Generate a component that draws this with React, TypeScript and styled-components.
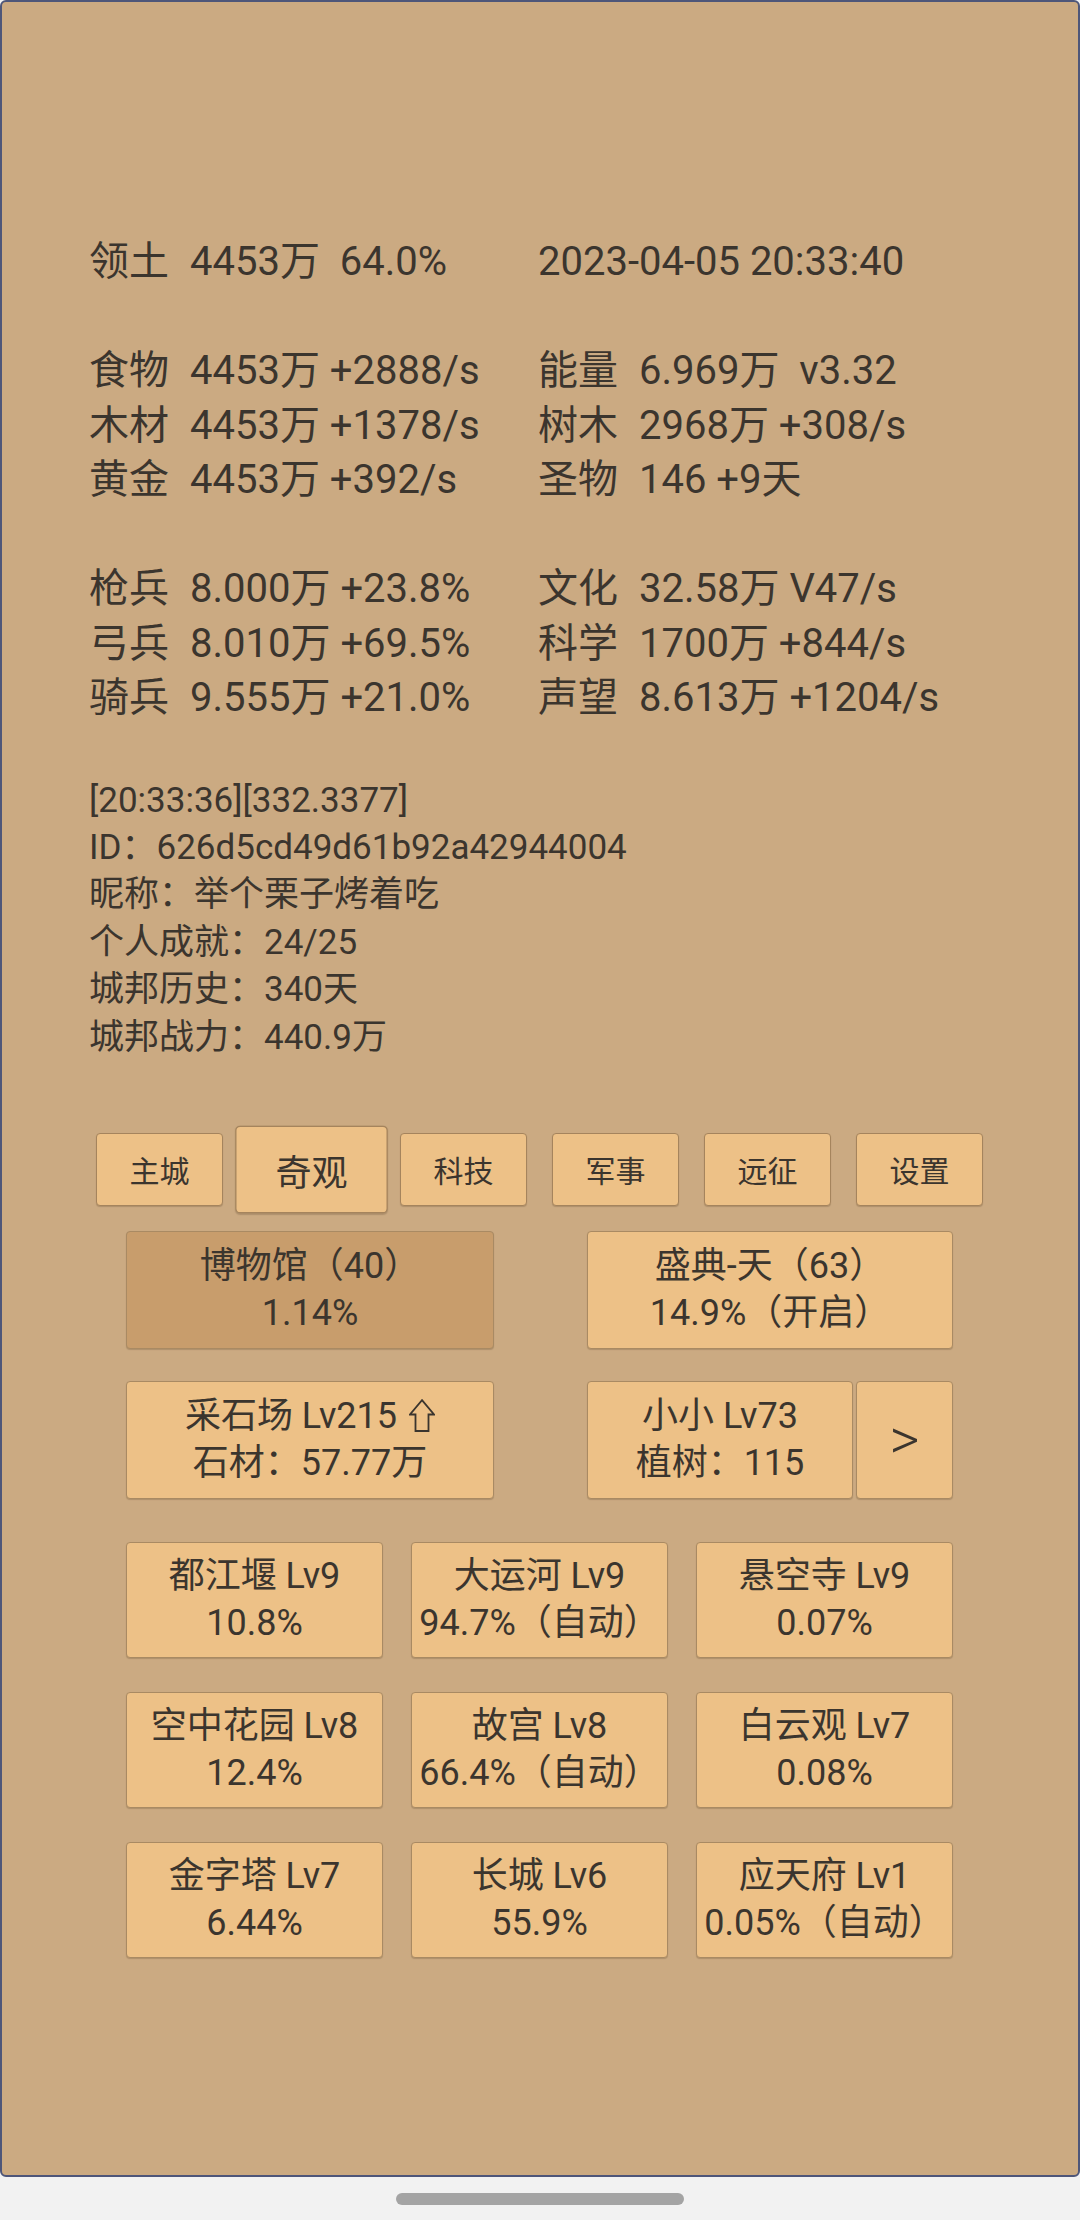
import React from "react";
import styled, { createGlobalStyle } from "styled-components";

const ink = "#3b352e";

const GlobalStyle = createGlobalStyle`
  html, body {
    margin: 0;
    padding: 0;
    background: #f2f2f2;
  }
  body {
    font-family: Roboto, "Noto Sans CJK SC", sans-serif;
    color: ${ink};
  }
`;

const Screen = styled.div`
  width: 1080px;
  height: 2220px;
  display: flex;
  flex-direction: column;
`;

const Panel = styled.div`
  box-sizing: border-box;
  height: 2177px;
  background: #cbaa82;
  border: 2px solid #4e5679;
  border-radius: 6px;
  padding-top: 233px;
  display: flex;
  flex-direction: column;
`;

const HomeArea = styled.div`
  flex: 1;
  display: flex;
  justify-content: center;
  align-items: center;
`;

const HomeBar = styled.div`
  width: 288px;
  height: 12px;
  border-radius: 6px;
  background: #a4a4a4;
`;

const Stats = styled.div`
  padding-left: 87px;
  font-size: 40px;
  white-space: pre;
`;

const StatGroup = styled.div<{ $gap?: boolean }>`
  margin-top: ${(p) => (p.$gap ? "54.5px" : "0")};
`;

const StatRow = styled.div`
  display: grid;
  grid-template-columns: 449px 1fr;
  height: 54.5px;
  line-height: 54.5px;
`;

const StatCell = styled.div`
  display: flex;
`;

const StatLabel = styled.span`
  width: 101px;
  flex: none;
`;

const Info = styled.div`
  margin-top: 51px;
  padding-left: 87px;
  font-size: 35px;
  line-height: 47.4px;
`;

const Tabs = styled.div`
  margin-top: 72px;
  padding-left: 94px;
  display: flex;
  gap: 25px;
`;

const Tab = styled.div<{ $active?: boolean }>`
  box-sizing: border-box;
  width: 127px;
  height: 73px;
  display: flex;
  align-items: center;
  justify-content: center;
  font-size: 30px;
  background: #edc187;
  border: 1px solid #a5845d;
  border-radius: 4px;
  box-shadow: 0 1px 1px rgba(60, 40, 20, 0.2);
  transform: ${(p) => (p.$active ? "scale(1.2)" : "none")};
`;

const Cards = styled.div`
  margin-top: 25px;
  padding-left: 124px;
  width: 827px;
  display: flex;
  flex-direction: column;
`;

const PairRow = styled.div<{ $mt: number }>`
  margin-top: ${(p) => p.$mt}px;
  display: grid;
  grid-template-columns: 368px 366px;
  column-gap: 93px;
  height: 118px;
`;

const TripleRow = styled.div<{ $mt: number }>`
  margin-top: ${(p) => p.$mt}px;
  display: grid;
  grid-template-columns: repeat(3, 257px);
  column-gap: 28px;
  height: 116px;
`;

const Split = styled.div`
  display: grid;
  grid-template-columns: 266px 97px;
  column-gap: 3px;
`;

const Card = styled.div<{ $pressed?: boolean }>`
  box-sizing: border-box;
  display: flex;
  flex-direction: column;
  align-items: center;
  justify-content: center;
  font-size: 36px;
  line-height: 47px;
  white-space: nowrap;
  background: ${(p) => (p.$pressed ? "#c89d6c" : "#edc187")};
  border: 1px solid #a98a63;
  border-radius: 4px;
  box-shadow: 0 1px 1px rgba(60, 40, 20, 0.2);
`;

const NextCard = styled(Card)`
  font-size: 58px;
  font-weight: 300;
`;

const UpArrow = styled.svg`
  width: 26px;
  height: 33px;
  margin-left: 12px;
  vertical-align: -4px;
`;

type Cell = { label?: string; value: string };
const statGroups: [Cell, Cell][][] = [
  [[{ label: "领土", value: "4453万  64.0%" }, { value: "2023-04-05 20:33:40" }]],
  [
    [{ label: "食物", value: "4453万 +2888/s" }, { label: "能量", value: "6.969万  v3.32" }],
    [{ label: "木材", value: "4453万 +1378/s" }, { label: "树木", value: "2968万 +308/s" }],
    [{ label: "黄金", value: "4453万 +392/s" }, { label: "圣物", value: "146 +9天" }],
  ],
  [
    [{ label: "枪兵", value: "8.000万 +23.8%" }, { label: "文化", value: "32.58万 V47/s" }],
    [{ label: "弓兵", value: "8.010万 +69.5%" }, { label: "科学", value: "1700万 +844/s" }],
    [{ label: "骑兵", value: "9.555万 +21.0%" }, { label: "声望", value: "8.613万 +1204/s" }],
  ],
];

const infoLines = [
  "[20:33:36][332.3377]",
  "ID：626d5cd49d61b92a42944004",
  "昵称：举个栗子烤着吃",
  "个人成就：24/25",
  "城邦历史：340天",
  "城邦战力：440.9万",
];

const tabs = ["主城", "奇观", "科技", "军事", "远征", "设置"];

const wonders: [string, string][][] = [
  [["都江堰 Lv9", "10.8%"], ["大运河 Lv9", "94.7%（自动）"], ["悬空寺 Lv9", "0.07%"]],
  [["空中花园 Lv8", "12.4%"], ["故宫 Lv8", "66.4%（自动）"], ["白云观 Lv7", "0.08%"]],
  [["金字塔 Lv7", "6.44%"], ["长城 Lv6", "55.9%"], ["应天府 Lv1", "0.05%（自动）"]],
];

const StatCellView = ({ label, value }: Cell) => (
  <StatCell>
    {label && <StatLabel>{label}</StatLabel>}
    <span>{value}</span>
  </StatCell>
);

export default function App() {
  return (
    <Screen>
      <GlobalStyle />
      <Panel>
        <Stats>
          {statGroups.map((group, gi) => (
            <StatGroup key={gi} $gap={gi > 0}>
              {group.map(([a, b], ri) => (
                <StatRow key={ri}>
                  <StatCellView {...a} />
                  <StatCellView {...b} />
                </StatRow>
              ))}
            </StatGroup>
          ))}
        </Stats>

        <Info>
          {infoLines.map((l) => (
            <div key={l}>{l}</div>
          ))}
        </Info>

        <Tabs>
          {tabs.map((t) => (
            <Tab key={t} $active={t === "奇观"}>
              {t}
            </Tab>
          ))}
        </Tabs>

        <Cards>
          <PairRow $mt={0}>
            <Card $pressed>
              <div>博物馆（40）</div>
              <div>1.14%</div>
            </Card>
            <Card>
              <div>盛典-天（63）</div>
              <div>14.9%（开启）</div>
            </Card>
          </PairRow>
          <PairRow $mt={32}>
            <Card>
              <div>
                采石场 Lv215
                <UpArrow viewBox="0 0 26 33">
                  <path
                    d="M13 1.2 L25 15.5 L19.5 15.5 L19.5 32 L6.5 32 L6.5 15.5 L1 15.5 Z"
                    fill="none"
                    stroke={ink}
                    strokeWidth="1.8"
                    strokeLinejoin="miter"
                  />
                </UpArrow>
              </div>
              <div>石材：57.77万</div>
            </Card>
            <Split>
              <Card>
                <div>小小 Lv73</div>
                <div>植树：115</div>
              </Card>
              <NextCard>&gt;</NextCard>
            </Split>
          </PairRow>
          {wonders.map((row, i) => (
            <TripleRow key={i} $mt={i === 0 ? 43 : 34}>
              {row.map(([name, pct]) => (
                <Card key={name}>
                  <div>{name}</div>
                  <div>{pct}</div>
                </Card>
              ))}
            </TripleRow>
          ))}
        </Cards>
      </Panel>
      <HomeArea>
        <HomeBar />
      </HomeArea>
    </Screen>
  );
}
